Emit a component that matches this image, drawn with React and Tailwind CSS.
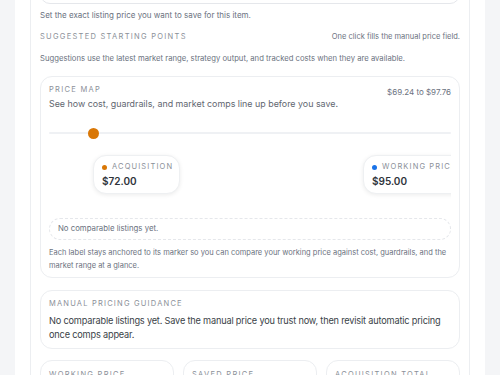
export default function App() {
  return (
    <div className="h-[375px] overflow-hidden bg-[#f4f5f7] px-[15px] font-['Inter',sans-serif]">
      <div className="h-full bg-white px-[15px]">
        <div className="flex h-full flex-col border-x border-[#eceef1] px-[9px]">
          {/* Manual price input (scrolled) */}
          <div className="-mt-[26px] h-[30px] shrink-0 rounded-[10px] border border-[#e5e7eb] bg-white" />
          <p className="mt-[5px] text-[8px] leading-[12px] text-[#6b7280]">
            Set the exact listing price you want to save for this item.
          </p>

          {/* Suggested starting points */}
          <div className="mt-[10px] flex items-center justify-between">
            <span className="text-[7.5px] leading-[12px] tracking-[0.17em] text-[#8b9099]">SUGGESTED STARTING POINTS</span>
            <span className="text-[7.5px] leading-[12px] text-[#6b7280]">One click fills the manual price field.</span>
          </div>
          <p className="mt-[10px] text-[7.7px] leading-[12px] text-[#6b7280]">
            Suggestions use the latest market range, strategy output, and tracked costs when they are available.
          </p>

          {/* Price map */}
          <div className="mt-[11px] shrink-0 rounded-[12px] border border-[#eceef1] px-[8px] pt-[7px] pb-[5px]">
            <div className="flex justify-between">
              <div>
                <div className="text-[7.5px] leading-[12px] tracking-[0.17em] text-[#8b9099]">PRICE MAP</div>
                <div className="mt-[1px] text-[8.9px] leading-[14px] text-[#5f6670]">
                  See how cost, guardrails, and market comps line up before you save.
                </div>
              </div>
              <div className="pt-[2px] text-[8px] leading-[12px] text-[#6b7280]">$69.24 to $97.76</div>
            </div>

            <div className="relative mt-[2px] h-[105px] overflow-hidden">
              <div className="absolute left-0 right-0 top-[19px] h-[2px] rounded-full bg-[#eff1f4]" />
              <div className="absolute left-[39px] top-[15px] h-[11px] w-[11px] rounded-full bg-[#d97706]" />
              <div className="absolute left-[44px] top-[42px] flex h-[39px] w-[87px] flex-col justify-center rounded-[13px] border border-[#eef0f2] bg-white px-[8px] shadow-[0_1px_4px_rgba(0,0,0,0.08)]">
                <div className="flex items-center gap-[5px]">
                  <span className="block h-[5px] w-[5px] shrink-0 rounded-full bg-[#d97706]" />
                  <span className="text-[7.5px] leading-[10px] tracking-[0.15em] text-[#8b9099]">ACQUISITION</span>
                </div>
                <div className="mt-[3px] text-[10px] font-semibold leading-[12px] text-[#2f343b]">$72.00</div>
              </div>
              <div className="absolute left-[314px] top-[42px] flex h-[39px] w-[104px] flex-col justify-center rounded-[13px] border border-[#eef0f2] bg-white px-[8px] shadow-[0_1px_4px_rgba(0,0,0,0.08)]">
                <div className="flex items-center gap-[5px]">
                  <span className="block h-[5px] w-[5px] shrink-0 rounded-full bg-[#1a73e8]" />
                  <span className="whitespace-nowrap text-[7.5px] leading-[10px] tracking-[0.15em] text-[#8b9099]">WORKING PRICE</span>
                </div>
                <div className="mt-[3px] text-[10px] font-semibold leading-[12px] text-[#2f343b]">$95.00</div>
              </div>
            </div>

            <div className="flex h-[22px] items-center rounded-full border border-dashed border-[#e5e7eb] px-[8px] text-[7.8px] text-[#6b7280]">
              No comparable listings yet.
            </div>
            <p className="mt-[6px] text-[7.5px] leading-[13px] text-[#6b7280]">
              Each label stays anchored to its marker so you can compare your working price against cost, guardrails, and the market range at a glance.
            </p>
          </div>

          {/* Manual pricing guidance */}
          <div className="mt-[12px] shrink-0 rounded-[12px] border border-[#eceef1] px-[8px] pt-[7px] pb-[6px]">
            <div className="text-[7.5px] leading-[12px] tracking-[0.16em] text-[#8b9099]">MANUAL PRICING GUIDANCE</div>
            <p className="mt-[4px] text-[9.2px] leading-[14px] tracking-[-0.02em] text-[#3a3f47]">
              No comparable listings yet. Save the manual price you trust now, then revisit automatic pricing once comps appear.
            </p>
          </div>

          {/* Totals */}
          <div className="mt-[11px] grid shrink-0 grid-cols-3 gap-[9px]">
            {["WORKING PRICE", "SAVED PRICE", "ACQUISITION TOTAL"].map((label) => (
              <div key={label} className="h-[40px] rounded-[12px] border border-[#eceef1] px-[8px] pt-[8px]">
                <div className="text-[7.5px] leading-[12px] tracking-[0.17em] text-[#8b9099]">{label}</div>
              </div>
            ))}
          </div>
        </div>
      </div>
    </div>
  )
}
